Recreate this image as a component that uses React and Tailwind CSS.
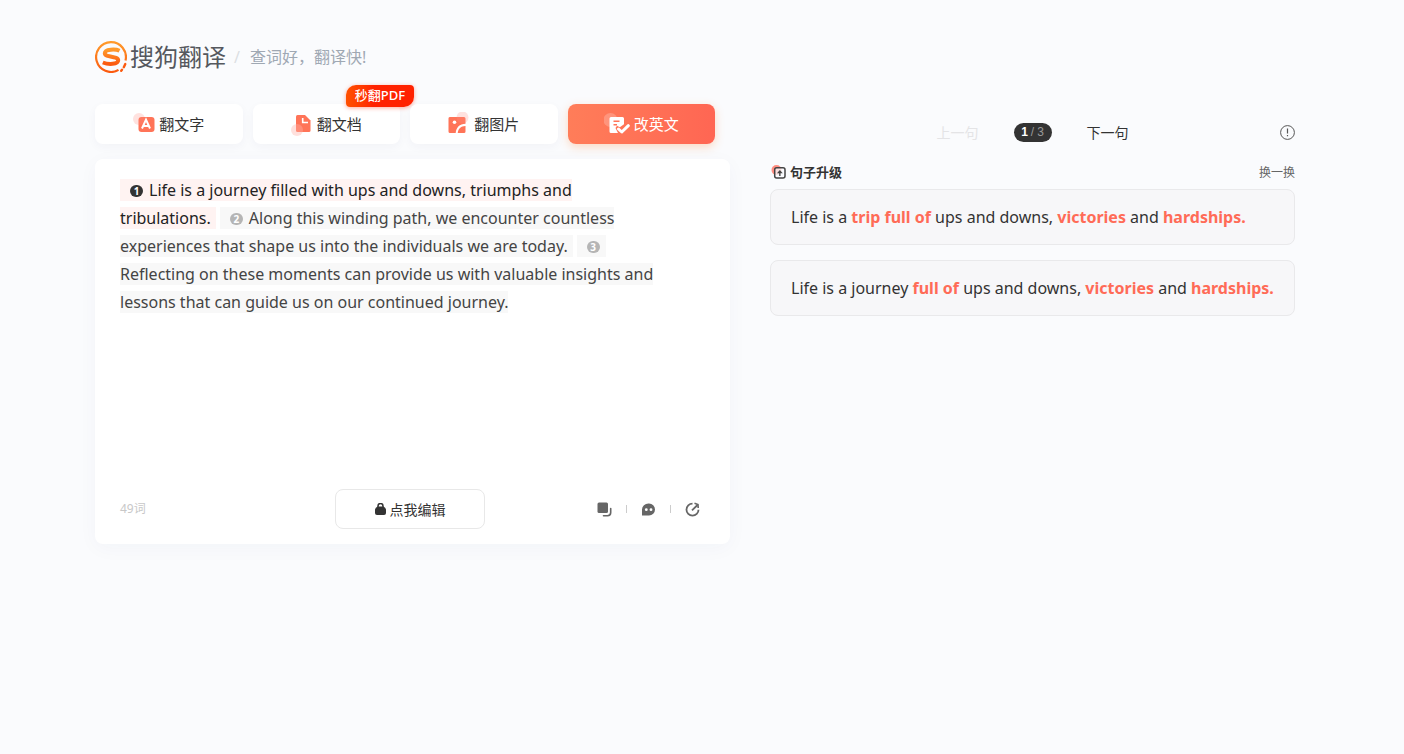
import React, { useState } from 'react';

const sentences = [
    "Life is a journey filled with ups and downs, triumphs and tribulations.",
    "Along this winding path, we encounter countless experiences that shape us into the individuals we are today.",
    "Reflecting on these moments can provide us with valuable insights and lessons that can guide us on our continued journey."
];

// [text, isChanged]
const upgrades = [
    [["Life is a ", false], ["trip full of", true], [" ups and downs, ", false], ["victories", true], [" and ", false], ["hardships.", true]],
    [["Life is a journey ", false], ["full of", true], [" ups and downs, ", false], ["victories", true], [" and ", false], ["hardships.", true]]
];

function Logo() {
    return (
        <svg className="size-8" viewBox="0 0 32 32" fill="none" aria-hidden="true">
            <defs>
                <linearGradient id="logo-fill" x1="0" y1="0" x2="0" y2="1">
                    <stop offset="0" stopColor="#ff9a2b" />
                    <stop offset="1" stopColor="#fb5a0f" />
                </linearGradient>
            </defs>
            <path d="M23.500 28.900A14.900 14.900 0 1 1 30.500 19.500" stroke="url(#logo-fill)" strokeWidth="2.200" />
            <path d="M24.500 9.800C21 8 9.800 7.800 9.800 12.300c0 4.500 13.400 2.500 13.400 7 0 4.400-10.200 4.200-15.400 2.200" stroke="url(#logo-fill)" strokeWidth="4" />
            <path d="M30.300 23l-1.500 3.200M27 28.800l-.8 1" stroke="#fb5a0f" strokeWidth="2.400" strokeLinecap="round" />
        </svg>
    );
}

function TextIcon() {
    return (
        <svg className="h-6 w-[22px]" viewBox="0 0 22 24" fill="none" aria-hidden="true">
            <rect x="5.500" y="5" width="16" height="15" rx="3" fill="#ff7458" />
            <circle cx="6" cy="7" r="6" fill="#ff8d80" fillOpacity=".25" />
            <path d="M9 16.500l4-8.800 4 8.800M10.500 14h5" stroke="#fff" strokeWidth="2" />
        </svg>
    );
}

function DocIcon() {
    return (
        <svg className="h-6 w-[22px]" viewBox="0 0 22 24" fill="none" aria-hidden="true">
            <path d="M6.500 3H14l5.500 5.500v10a1.500 1.500 0 0 1-1.500 1.500H6.500A1.500 1.500 0 0 1 5 18.500v-14A1.500 1.500 0 0 1 6.500 3Z" fill="#ff7458" />
            <path d="M11.700 6v4.500H17" stroke="#fff" strokeWidth="1.600" />
            <circle cx="6" cy="18" r="6" fill="#ffb1a8" fillOpacity=".4" />
        </svg>
    );
}

function PictureIcon() {
    return (
        <svg className="h-6 w-[22px]" viewBox="0 0 22 24" fill="none" aria-hidden="true">
            <path d="M2.500 5h13.500a1.500 1.500 0 0 1 1.500 1.500v5.200c-6 .3-9.300 3.500-9.800 9.300H2A1.500 1.500 0 0 1 .5 19.500v-13A1.500 1.500 0 0 1 2.500 5Z" fill="#ff7458" />
            <path d="M17.500 14v5.500A1.500 1.500 0 0 1 16 21H9.700c.5-4.500 3.300-6.800 7.800-7Z" fill="#ff7458" />
            <circle cx="14.500" cy="5.500" r="6" fill="#ff8d80" fillOpacity=".25" />
            <circle cx="6.500" cy="10.200" r="1.800" fill="#fff" />
        </svg>
    );
}

function CorrectIcon() {
    return (
        <svg className="h-6 w-[26px]" viewBox="0 0 26 24" fill="none" aria-hidden="true">
            <circle cx="6.500" cy="8" r="7" fill="#fff" fillOpacity=".22" />
            <path d="M7 5h11.500A1.500 1.500 0 0 1 20 6.500v5.700l-4.200 3-2.800-1.400-1.500 2.200 2.500 5H7A1.500 1.500 0 0 1 5.500 19.500v-13A1.500 1.500 0 0 1 7 5Z" fill="#fff" />
            <path d="M9.500 9.200h6M9.500 12.800h3.500" stroke="#ff7458" strokeWidth="1.500" />
            <path d="M14.500 17l3.300 3 6.500-6.300" stroke="#fff" strokeWidth="3" strokeLinecap="round" strokeLinejoin="round" />
        </svg>
    );
}

function Tab({ icon, name, badge, active }) {
    return (
        <button
            type="button"
            className={active
                ? "relative flex h-10 items-center justify-center gap-1 rounded-lg bg-linear-to-r from-[#ff7d59] to-[#ff6653] text-[15px] text-white shadow-[0_3px_10px_rgba(255,140,60,0.3)]"
                : "relative flex h-10 items-center justify-center gap-1 rounded-lg bg-white text-[15px] text-[#333] shadow-[0_3px_10px_rgba(40,60,100,0.04)]"}
        >
            {icon}
            <span>{name}</span>
            {badge && (
                <span className="absolute -top-[19px] -right-[14px] flex h-[22px] w-[68px] items-center justify-center rounded-[10px_4px_10px_4px] bg-linear-to-r from-[#ff5000] to-[#ff2200] to-40% text-[13px] font-medium text-white shadow-[0_1px_4px_rgba(255,40,0,0.4)]">
                    {badge}
                </span>
            )}
        </button>
    );
}

function Sentence({ text, index, active }) {
    return (
        <span className={active ? "mr-1 bg-[#fff3f2] pr-[5px] pl-[10px] text-[#222]" : "mr-1 bg-[#f8f8f8] pr-[5px] pl-[10px] text-[#444] last:pr-0"}>
            <span className={active
                ? "mr-[6px] inline-flex h-3 w-[13px] items-center justify-center rounded-full bg-[#333] align-[1px] text-[10px] leading-3 font-bold text-white"
                : "mr-[6px] inline-flex h-3 w-[13px] items-center justify-center rounded-full bg-[#b5b5b5] align-[1px] text-[10px] leading-3 font-bold text-white"}>
                {index + 1}
            </span>
            <wbr />
            {text}
        </span>
    );
}

function EditorCard() {
    return (
        <div className="mt-[15px] flex min-h-[385px] flex-col rounded-lg bg-white pt-[17px] pr-[30px] pb-[15px] pl-[25px] shadow-[0_4px_20px_rgba(40,60,100,0.035)]">
            <p className="mr-[30px] grow text-[16px] leading-7">
                {sentences.map((text, index) => (
                    <Sentence text={text} index={index} active={index === 0} key={index} />
                ))}
            </p>
            <div className="grid grid-cols-[1fr_auto_1fr] items-center">
                <span className="text-[12px] text-[#c8c8c8]">49词</span>
                <button type="button" className="flex h-10 w-[150px] items-center justify-center gap-1 rounded-lg border border-[#e8e8e8] bg-white text-[14px] text-[#333]">
                    <svg className="h-[12px] w-[11px]" viewBox="0 0 11 12" aria-hidden="true">
                        <path d="M3 5V3a2.500 2.500 0 0 1 5 0v2" fill="none" stroke="#333" strokeWidth="1.500" />
                        <path d="M2.500 3.500h6Q11 4.500 11 7v3q0 2-2 2H2q-2 0-2-2V7q0-2.500 2.500-3.500Z" fill="#333" />
                    </svg>
                    点我编辑
                </button>
                <div className="flex items-center justify-end gap-[14px]">
                    <button type="button" aria-label="复制">
                        <svg className="size-[15px]" viewBox="0 0 15 15" aria-hidden="true">
                            <rect x="0.500" y="0.500" width="10.500" height="10.500" rx="1.500" fill="#666" />
                            <path d="M13.700 6.500v4a3.200 3.200 0 0 1-3.200 3.200H6.500" fill="none" stroke="#666" strokeWidth="1.600" strokeLinecap="round" />
                        </svg>
                    </button>
                    <span className="h-2 w-px bg-[#ccc]"></span>
                    <button type="button" aria-label="反馈">
                        <svg className="size-[15px]" viewBox="0 0 15 15" aria-hidden="true">
                            <path d="M1 13.500V7.500a6.500 6 0 0 1 6.500-6h.5a6 6 0 0 1 0 12Z" fill="#666" />
                            <circle cx="5.300" cy="7.700" r="1.400" fill="#fff" />
                            <circle cx="10" cy="7.700" r="1.400" fill="#fff" />
                        </svg>
                    </button>
                    <span className="h-2 w-px bg-[#ccc]"></span>
                    <button type="button" aria-label="分享">
                        <svg className="size-[15px]" viewBox="0 0 15 15" fill="none" stroke="#666" strokeWidth="1.800" aria-hidden="true">
                            <path d="M7.500 1.700A6 6 0 1 0 13.500 7.700" />
                            <path d="M7 8.300L12.500 3" />
                            <path d="M9.500 1.300l3.500 1.200.2 3.500" strokeWidth="1.600" />
                        </svg>
                    </button>
                </div>
            </div>
        </div>
    );
}

function UpgradePanel() {
    const [current, setCurrent] = useState(1);

    return (
        <section className="min-w-0 flex-1 pt-2">
            <div className="grid h-10 grid-cols-[1fr_auto_1fr] items-center text-[14px]">
                <button type="button" disabled={current === 1} onClick={() => setCurrent(current - 1)} className="justify-self-end text-[#333] disabled:text-[#e4e4e6]">上一句</button>
                <span className="mx-[35px] flex h-[19px] w-[38px] items-center justify-center gap-[3px] rounded-full bg-[#333] font-['Liberation_Sans'] text-[12px] text-[#999]">
                    <b className="text-white">{current}</b>
                    <span>/</span>
                    <span>3</span>
                </span>
                <div className="flex items-center justify-between">
                    <button type="button" disabled={current === 3} onClick={() => setCurrent(current + 1)} className="text-[#333] disabled:text-[#e4e4e6]">下一句</button>
                    <button type="button" aria-label="说明">
                        <svg className="size-[15px]" viewBox="0 0 15 15" fill="none" stroke="#555" aria-hidden="true">
                            <circle cx="7.500" cy="7.500" r="6.900" />
                            <path d="M7.500 3.500v5M7.500 10v1.300" strokeWidth="1.200" />
                        </svg>
                    </button>
                </div>
            </div>
            <div className="mt-[9px] flex h-6 items-center justify-between">
                <h2 className="flex items-center gap-1 text-[13px] font-bold text-[#333]">
                    <svg className="size-4" viewBox="0 0 16 16" fill="none" aria-hidden="true">
                        <circle cx="6.500" cy="5" r="5" fill="#ff8d80" />
                        <rect x="4.700" y="2.700" width="10.300" height="10.300" rx="2" fill="#fafbfd" fillOpacity=".75" stroke="#444" strokeWidth="1.500" />
                        <path d="M9.850 11V6.500" stroke="#444" strokeWidth="1.400" />
                        <path d="M7 8.300L9.850 5l2.850 3.300Z" fill="#444" />
                    </svg>
                    句子升级
                </h2>
                <button type="button" className="text-[12px] text-[#666]">换一换</button>
            </div>
            <ul className="mt-1 flex flex-col gap-[15px]">
                {upgrades.map((parts, index) => (
                    <li key={index} className="min-h-14 rounded-lg border border-[#e9e9eb] bg-[#f7f7f9] px-5 py-[13px] text-[16px] leading-7 text-[#333]">
                        {parts.map(([text, changed], i) => (
                            changed ? <b key={i} className="text-[#ff6b57]">{text}</b> : <span key={i}>{text}</span>
                        ))}
                    </li>
                ))}
            </ul>
        </section>
    );
}

function App() {
    return (
        <div className="min-h-screen bg-[#fafbfd] pr-[14px] font-['Noto_Sans','Noto_Sans_CJK_SC',sans-serif]">
            <div className="mx-auto max-w-[1200px] pt-[41px]">
                <header className="flex h-8 items-center">
                    <a href="#" className="flex items-center gap-[3px] text-[24px] text-[#55585e]">
                        <Logo />
                        搜狗翻译
                    </a>
                    <span className="mr-[10px] ml-2 text-[16px] text-[#dcdfe3]">/</span>
                    <span className="text-[16px] text-[#9fa8b3]">查词好，翻译快!</span>
                </header>
                <main className="mt-[31px] flex gap-10">
                    <section className="w-[635px]">
                        <nav className="mr-[15px] grid grid-cols-4 gap-[10px]">
                            <Tab icon={<TextIcon />} name="翻文字" />
                            <Tab icon={<DocIcon />} name="翻文档" badge="秒翻PDF" />
                            <Tab icon={<PictureIcon />} name="翻图片" />
                            <Tab icon={<CorrectIcon />} name="改英文" active />
                        </nav>
                        <EditorCard />
                    </section>
                    <UpgradePanel />
                </main>
            </div>
        </div>
    );
}

export default App;
